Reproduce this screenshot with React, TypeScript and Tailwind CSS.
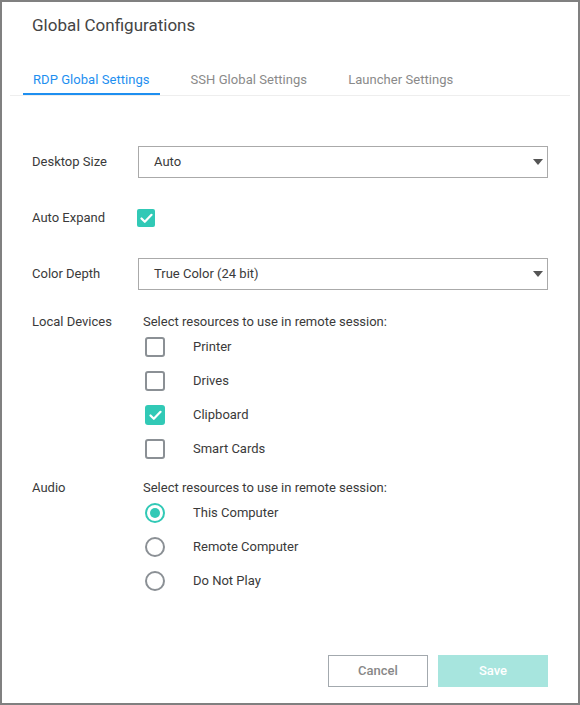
import { useState } from 'react'

const font = { fontFamily: 'Roboto, "Liberation Sans", sans-serif' }

export default function App() {
  const [tab] = useState(0)
  const tabs = ['RDP Global Settings', 'SSH Global Settings', 'Launcher Settings']
  return (
    <div style={font} className="box-border h-[705px] w-[580px] overflow-hidden border-2 border-[#808080] bg-white text-[13px] text-[#3a3a3a]">
      <h1 className="pl-[30px] pt-[11px] text-[17px] leading-[24px] text-[#444]">Global Configurations</h1>

      <div className="mx-[8px] mt-[30px] flex gap-[21px] border-b border-[#eeeeee] pl-[13px]">
        {tabs.map((t, i) => (
          <div
            key={t}
            className={`px-[10px] pb-[1px] pt-[1px] text-[13px] leading-[24px] tracking-[0.05px] ${i === tab ? 'border-b-2 border-[#1e8ff0] text-[#1e8ff0]' : 'border-b-2 border-transparent text-[#8a8a8a]'}`}
          >
            {t}
          </div>
        ))}
      </div>

      <div className="pl-[30px] pr-[30px] pt-[50px]">
        <Row label="Desktop Size">
          <Select value="Auto" />
        </Row>

        <div className="mt-[24px] flex h-[32px] items-center">
          <span className="w-[105px] shrink-0">Auto Expand</span>
          <span className="flex h-[18px] w-[18px] items-center justify-center rounded-[2px] bg-[#31c9b6]">
            <Check />
          </span>
        </div>

        <div className="mt-[24px]">
          <Row label="Color Depth">
            <Select value="True Color (24 bit)" />
          </Row>
        </div>

        <div className="mt-[22px] flex">
          <span className="w-[111px] shrink-0 leading-[20px]">Local Devices</span>
          <div>
            <div className="leading-[20px]">Select resources to use in remote session:</div>
            <div className="ml-[2px] mt-[5px] flex flex-col gap-[14px]">
              {[
                ['Printer', false],
                ['Drives', false],
                ['Clipboard', true],
                ['Smart Cards', false],
              ].map(([l, c]) => (
                <div key={l as string} className="flex h-[20px] items-center">
                  {c ? (
                    <span className="flex h-[20px] w-[20px] items-center justify-center rounded-[3px] bg-[#31c9b6]">
                      <Check />
                    </span>
                  ) : (
                    <span className="box-border h-[20px] w-[20px] rounded-[3px] border-2 border-[#8b9095]" />
                  )}
                  <span className="ml-[28px]">{l}</span>
                </div>
              ))}
            </div>
          </div>
        </div>

        <div className="mt-[19px] flex">
          <span className="w-[111px] shrink-0 leading-[20px]">Audio</span>
          <div>
            <div className="leading-[20px]">Select resources to use in remote session:</div>
            <div className="ml-[2px] mt-[5px] flex flex-col gap-[14px]">
              {[
                ['This Computer', true],
                ['Remote Computer', false],
                ['Do Not Play', false],
              ].map(([l, c]) => (
                <div key={l as string} className="flex h-[20px] items-center">
                  {c ? (
                    <span className="box-border flex h-[20px] w-[20px] items-center justify-center rounded-full border-2 border-[#31c9b6]">
                      <span className="h-[10px] w-[10px] rounded-full bg-[#31c9b6]" />
                    </span>
                  ) : (
                    <span className="box-border h-[20px] w-[20px] rounded-full border-2 border-[#8b9095]" />
                  )}
                  <span className="ml-[28px]">{l}</span>
                </div>
              ))}
            </div>
          </div>
        </div>

        <div className="mt-[64px] flex justify-end gap-[10px]">
          <button className="box-border h-[32px] w-[100px] border border-[#a3a9ae] bg-white text-[13px] font-medium text-[#888]">Cancel</button>
          <button className="h-[32px] w-[110px] bg-[#a7e5de] text-[13px] font-medium text-white">Save</button>
        </div>
      </div>
    </div>
  )
}

function Row({ label, children }: { label: string; children: React.ReactNode }) {
  return (
    <div className="flex h-[32px] items-center">
      <span className="w-[106px] shrink-0">{label}</span>
      {children}
    </div>
  )
}

function Select({ value }: { value: string }) {
  return (
    <div className="box-border flex h-[32px] flex-1 items-center justify-between border border-[#aaaaaa] pl-[15px] pr-[3px]">
      <span>{value}</span>
      <svg width="10" height="6" viewBox="0 0 10 6" className="mr-[1px]">
        <path d="M0 0h10L5 6z" fill="#555" />
      </svg>
    </div>
  )
}

function Check() {
  return (
    <svg width="13" height="11" viewBox="0 0 13 11">
      <path d="M1.5 5.5l3.3 3.3L11.5 1.8" fill="none" stroke="#fff" strokeWidth="2.2" strokeLinecap="round" strokeLinejoin="round" />
    </svg>
  )
}
